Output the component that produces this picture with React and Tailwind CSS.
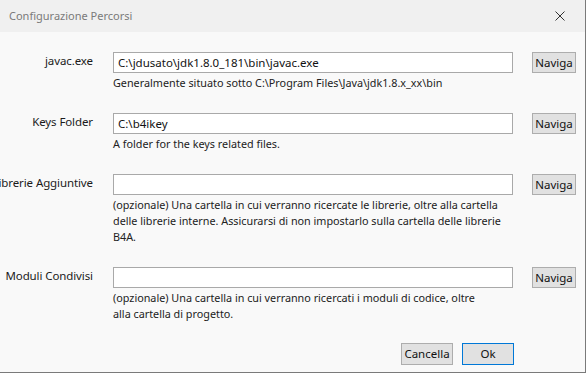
import React from 'react';

const rows = [
  {
    label: 'javac.exe',
    value: 'C:\\jdusato\\jdk1.8.0_181\\bin\\javac.exe',
    help: ['Generalmente situato sotto C:\\Program Files\\Java\\jdk1.8.x_xx\\bin'],
  },
  {
    label: 'Keys Folder',
    value: 'C:\\b4ikey',
    help: ['A folder for the keys related files.'],
  },
  {
    label: 'Librerie Aggiuntive',
    value: '',
    help: [
      "(opzionale) Una cartella in cui verranno ricercate le librerie, oltre alla cartella",
      'delle librerie interne. Assicurarsi di non impostarlo sulla cartella delle librerie',
      'B4A.',
    ],
  },
  {
    label: 'Moduli Condivisi',
    value: '',
    help: [
      '(opzionale) Una cartella in cui verranno ricercati i moduli di codice, oltre',
      'alla cartella di progetto.',
    ],
  },
];

function PathRow({ label, value, help, first }) {
  return (
    <div className={`flex items-start ${first ? '' : 'mt-[22px]'}`}>
      <div className="flex w-[93px] shrink-0 justify-end">
        <span className="shrink-0 whitespace-nowrap pt-[1px] text-[11.5px] leading-[16px] tracking-[-0.1px] text-[#1b1b1b]">
          {label}
        </span>
      </div>
      <div className="ml-[20px] w-[400px] shrink-0">
        <div className="flex h-[21px] items-center border border-[#a9a9a9] bg-white px-[4px] text-[11.5px] leading-[16px] text-[#111]">
          {value}
        </div>
        <div className="mt-[2px] text-[10.8px] leading-[16px] text-[#222]">
          {help.map((line) => (
            <div key={line} className="whitespace-nowrap">
              {line}
            </div>
          ))}
        </div>
      </div>
      <button className="ml-[19px] flex h-[21px] w-[44px] shrink-0 items-center justify-center border border-[#adadad] bg-[#e1e1e1] text-[11.5px] leading-[16px] text-[#111]">
        Naviga
      </button>
    </div>
  );
}

export default function App() {
  return (
    <div
      className="h-[374px] w-[586px] overflow-hidden bg-white"
      style={{ fontFamily: '"Noto Sans", "Open Sans", sans-serif' }}
    >
      <div className="h-[373px] w-[586px] border-r border-b border-[#7a7a7a] bg-[#f9f9f9]">
        <div className="flex h-[32px] items-center justify-between bg-[#f0f0f0] pl-[9px] pr-[20px]">
          <span className="text-[11px] text-[#7a7a7a]">Configurazione Percorsi</span>
          <svg viewBox="0 0 10 10" className="h-[10px] w-[10px]" fill="none" stroke="#333" strokeWidth="1">
            <path d="M0.5 0.5l9 9M9.5 0.5l-9 9" />
          </svg>
        </div>
        <div className="pt-[20px]">
          {rows.map((r, i) => (
            <PathRow key={r.label} {...r} first={i === 0} />
          ))}
          <div className="mt-[21px] flex justify-end pr-[71px]">
            <button className="flex h-[22px] w-[52px] items-center justify-center border border-[#adadad] bg-[#e1e1e1] text-[11.5px] text-[#111]">
              Cancella
            </button>
            <button className="ml-[9px] flex h-[22px] w-[52px] items-center justify-center border border-[#0078d7] bg-[#e1e1e1] text-[11.5px] text-[#111]">
              Ok
            </button>
          </div>
        </div>
      </div>
    </div>
  );
}
